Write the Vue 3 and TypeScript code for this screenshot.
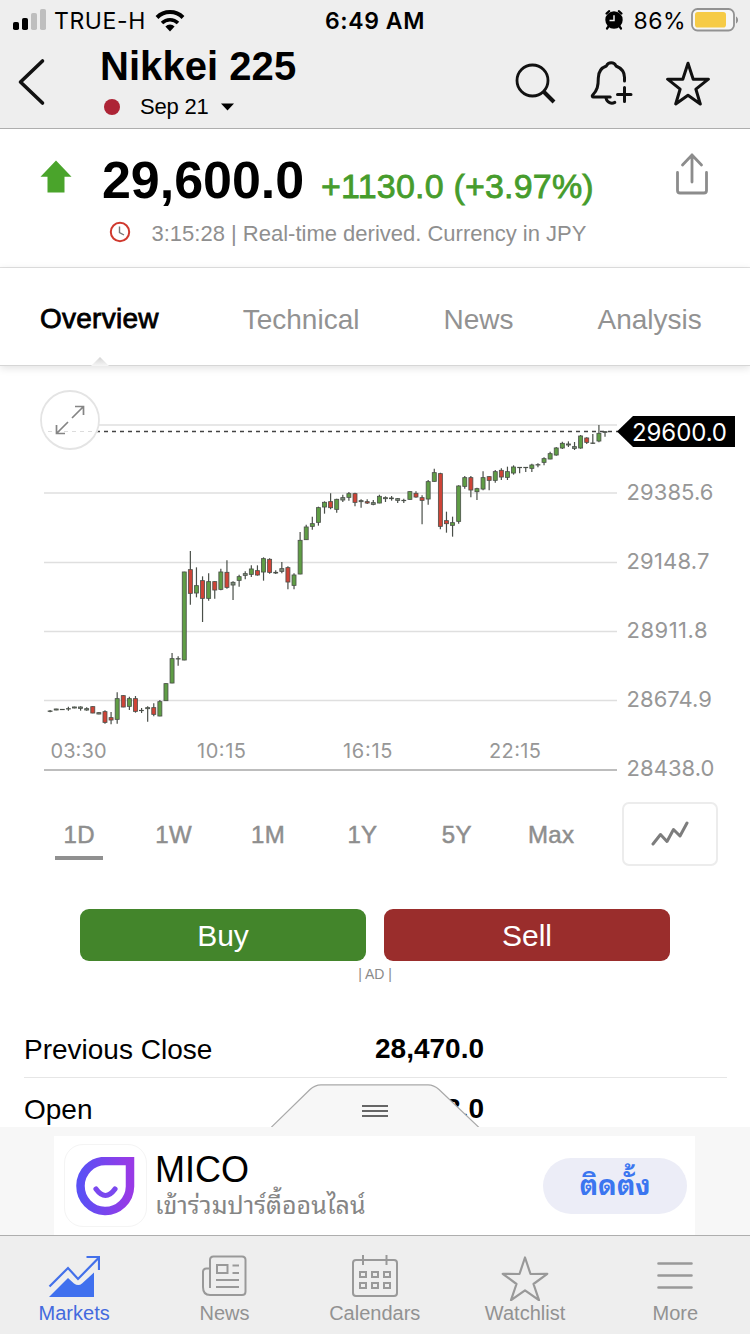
<script setup lang="ts">
interface Candle {
  x: number
  top: number
  bottom: number
  high: number
  low: number
  color: string
}

type Row = [string, number, number, number?, number?]

const colors: Record<string, string> = { g: '#5f9d45', r: '#cf4437', n: '#7a8a78' }

// Each block lists its candles as: kind, body top, body bottom, wick top, wick bottom (in thirds of a pixel below base).
const blocks: { base: number; rows: Row[] }[] = [
  {
    base: 540,
    rows: [
      ['n', 512, 515, 510, 517], ['n', 506, 511], ['n', 507, 509], ['n', 505, 508, 500, 512], ['n', 500, 505],
      ['n', 500, 506, 499, 512], ['n', 505, 511, 502, 512], ['r', 499, 520], ['n', 517, 523], ['r', 514, 548, 511, 551],
      ['r', 532, 541, 516, 553], ['g', 475, 539, 457, 551], ['r', 466, 502], ['g', 475, 500, 470, 510],
      ['r', 475, 515, 468, 518], ['n', 510, 513, 504, 519], ['n', 502, 507, 499, 545], ['r', 502, 524, 490, 529],
      ['g', 484, 529, 480, 529], ['g', 430, 483], ['g', 355, 430, 339, 430], ['n', 355, 358, 349, 377],
      ['g', 95, 361], ['r', 88, 161, 33, 194], ['g', 136, 160, 82, 172], ['r', 121, 176, 109, 246],
      ['g', 124, 176, 100, 182], ['r', 124, 151, 124, 176], ['g', 95, 149, 86, 151], ['r', 96, 143, 61, 146],
      ['n', 126, 136, 124, 180],
    ],
  },
  {
    base: 480,
    rows: [
      ['g', 289, 302, 284, 320], ['n', 280, 287, 274, 298], ['g', 266, 284, 256, 291], ['r', 271, 286, 256, 287],
      ['g', 235, 277, 232, 302], ['r', 237, 278, 235, 281], ['n', 276, 280, 271, 282], ['n', 265, 275, 246, 280],
      ['r', 262, 307, 259, 328], ['g', 284, 317, 280, 328], ['g', 180, 283, 156, 283], ['g', 140, 180, 134, 180],
      ['g', 130, 140, 110, 149], ['g', 82, 128, 80, 137], ['g', 66, 82, 64, 101], ['r', 64, 84, 40, 88],
      ['g', 57, 89, 56, 98], ['n', 52, 61, 44, 66], ['g', 40, 53, 36, 62], ['r', 40, 68, 38, 79],
      ['n', 61, 66, 58, 83], ['r', 64, 70, 58, 72], ['n', 67, 74, 60, 76], ['g', 48, 70, 44, 70],
    ],
  },
  {
    base: 410,
    rows: [
      ['n', 262, 267, 259, 276], ['n', 263, 267, 258, 272], ['n', 265, 272, 264, 279], ['n', 270, 273, 266, 279],
      ['g', 244, 269], ['r', 249, 262, 244, 263], ['r', 262, 272, 256, 343], ['g', 214, 268, 210, 284],
      ['g', 187, 215, 176, 215], ['r', 190, 350, 188, 358], ['r', 331, 342, 305, 368], ['g', 337, 347, 320, 380],
      ['g', 227, 335, 226, 341], ['g', 202, 230, 198, 236], ['r', 202, 241, 198, 262], ['g', 235, 246, 233, 270],
      ['g', 202, 238, 184, 241], ['r', 199, 212, 199, 241], ['g', 184, 212, 180, 218], ['r', 180, 202, 175, 210],
      ['g', 184, 203, 170, 210], ['g', 170, 190, 166, 194], ['n', 171, 173, 171, 190], ['n', 171, 173, 171, 186],
      ['g', 164, 176, 161, 186], ['n', 163, 166, 160, 172], ['g', 145, 158, 142, 166],
    ],
  },
  {
    base: 400,
    rows: [
      ['g', 160, 178, 155, 178], ['g', 143, 166, 141, 167], ['g', 129, 145, 125, 147], ['n', 131, 136, 124, 141],
      ['n', 139, 146, 126, 150], ['g', 107, 145, 105, 146], ['r', 113, 128, 112, 132], ['n', 128, 131, 102, 132],
      ['g', 99, 124, 75, 127], ['n', 94, 98, 94, 110],
    ],
  },
]

const candles: Candle[] = blocks
  .flatMap(({ base, rows }) => rows.map((r) => ({ base, r })))
  .map(({ base, r: [kind, top, bottom, high = top, low = bottom] }, i) => ({
    x: 50.1 + i * 6.098,
    top: base + top / 3,
    bottom: base + bottom / 3,
    high: base + high / 3,
    low: base + low / 3,
    color: colors[kind],
  }))

const gridLines = [425, 493, 562.5, 631.5, 700.5]
const prices = [
  { label: '29385.6', y: 500, w: 87 },
  { label: '29148.7', y: 569, w: 83 },
  { label: '28911.8', y: 638, w: 81 },
  { label: '28674.9', y: 707, w: 85.5 },
  { label: '28438.0', y: 776, w: 88 },
]
const times = [
  { label: '03:30', x: 50.5, w: 56 },
  { label: '10:15', x: 197, w: 49 },
  { label: '16:15', x: 343, w: 49.5 },
  { label: '22:15', x: 489, w: 52 },
]
const tabs = ['Overview', 'Technical', 'News', 'Analysis']
const ranges = ['1D', '1W', '1M', '1Y', '5Y', 'Max']
</script>

<template>
  <main class="screen">
    <div class="status">
      <div class="carrier">
        <svg width="34" height="24" viewBox="0 0 34 24">
          <rect x="1" y="14" width="6" height="8" rx="1.8" />
          <rect x="10" y="10" width="6" height="12" rx="1.8" />
          <rect x="19" y="5" width="6" height="17" rx="1.8" fill="#bebebe" />
          <rect x="28" y="1" width="6" height="21" rx="1.8" fill="#bebebe" />
        </svg>
        <span class="carrier-name">TRUE-H</span>
        <svg class="wifi" width="30" height="23" viewBox="0 0 30 23" fill="none" stroke="#000" stroke-width="4">
          <path d="M2 8.5a18.4 18.4 0 0 1 26 0" />
          <path d="M7 14a11.3 11.3 0 0 1 16 0" stroke-width="3.5" />
          <path d="M15 22.5l-4.6-5a6.5 6.5 0 0 1 9.2 0z" fill="#000" stroke="none" />
        </svg>
      </div>
      <strong class="clock">6:49 AM</strong>
      <div class="power">
        <svg width="20" height="22" viewBox="0 0 20 22">
          <path d="M2.5 4.5L5.2 2.2M17.5 4.5L14.8 2.2M4.5 17.5L3 19.5M15.5 17.5l1.5 2" stroke="#000" stroke-width="2.2" stroke-linecap="round" />
          <circle cx="10" cy="11" r="8.7" />
          <path d="M10 6.2V11.5H5.5" stroke="#eee" stroke-width="1.5" fill="none" />
        </svg>
        <span class="percent">86%</span>
        <svg width="47" height="24" viewBox="0 0 47 24">
          <rect x="1" y="1" width="42" height="21.5" rx="5.5" fill="#f6f6f6" stroke="#929292" stroke-width="1.8" />
          <rect x="4" y="4" width="31" height="15.5" rx="2.8" fill="#f6cb46" />
          <path d="M45 8.5c2.7 1 2.7 6 0 7z" fill="#929292" />
        </svg>
      </div>
    </div>

    <header class="header">
      <svg class="back" width="30" height="50" viewBox="0 0 30 50">
        <path d="M26.5 4L4.5 25l22 21" fill="none" stroke="#111" stroke-width="3.6" stroke-linecap="round" stroke-linejoin="round" />
      </svg>
      <div class="heading">
        <h1>Nikkei 225</h1>
        <div class="date">
          <i class="dot"></i>
          <span>Sep 21</span>
          <svg width="13" height="8" viewBox="0 0 13 8"><path d="M0 .5h13L6.5 7.5z" /></svg>
        </div>
      </div>
      <div class="actions">
        <svg width="44" height="46" viewBox="0 0 44 46" fill="none" stroke="#111">
          <circle cx="18.5" cy="20.5" r="15.5" stroke-width="2.8" />
          <path d="M29.5 31.5L40 42" stroke-width="4" />
        </svg>
        <svg class="bell" width="44" height="48" viewBox="0 0 44 48" fill="none" stroke="#111" stroke-width="3" stroke-linecap="round" stroke-linejoin="round">
          <path d="M35.5 20v-3.5c0-6-3.5-9.500-8.500-11.500-1.800-4.200-7.800-4.200-9.600 0-5 1.800-8.100 6.300-8.100 12 0 8-1 12.500-5.600 17-.9 1-.4 2 .8 2h16.700" />
          <path d="M17 37c1 4.800 5.500 6.200 8.800 4.400" />
          <path d="M35.500 26.500v14M28.500 33.500h13.500" />
        </svg>
        <svg width="46" height="46" viewBox="0 0 46 46">
          <path d="M23 3.200l5.200 16.100 15.200-.1-12.500 10 4.400 14.800L23 35.200l-12.300 8.800 4.400-14.800-12.500-10 15.200.1z" fill="none" stroke="#111" stroke-width="3" stroke-linejoin="round" />
        </svg>
      </div>
    </header>

    <section class="quote">
      <svg class="up" width="32" height="33" viewBox="0 0 32 33"><path d="M16 .5L31.5 16.700H24.500V32.500H7.500V16.700H.5z" fill="#4aa42b" /></svg>
      <div class="figures">
        <div class="price-line">
          <strong class="price">29,600.0</strong>
          <span class="change">+1130.0 (+3.97%)</span>
        </div>
        <div class="meta">
          <svg width="22" height="22" viewBox="0 0 22 22" fill="none">
            <circle cx="11" cy="11" r="9.200" stroke="#d0392e" stroke-width="2" />
            <path d="M10.500 5.500V11.500L15 14" stroke="#777" stroke-width="1.400" />
          </svg>
          <span>3:15:28 | Real-time derived. Currency in JPY</span>
        </div>
      </div>
      <svg class="share" width="34" height="44" viewBox="0 0 34 44" fill="none" stroke="#8c8c8c" stroke-width="2.800" stroke-linecap="round" stroke-linejoin="round">
        <path d="M17 30V3M7.500 13L17 3l9.500 10" />
        <path d="M2.500 20.500v18q0 2.500 2.500 2.500h24q2.500 0 2.500-2.500V20.500" />
      </svg>
    </section>

    <nav class="tabs">
      <a v-for="(t, i) in tabs" :key="t" :class="['tab', { current: i === 0 }]">{{ t }}</a>
      <svg class="notch" width="22" height="9" viewBox="0 0 22 9">
        <defs>
          <linearGradient id="notchShade" x1="0" y1="0" x2="0" y2="1">
            <stop offset="0" stop-color="#d4d4d4" />
            <stop offset="1" stop-color="#f6f6f6" />
          </linearGradient>
        </defs>
        <path d="M2 9L11 0l9 9z" fill="url(#notchShade)" />
      </svg>
    </nav>

    <svg class="chart" width="750" height="424" viewBox="0 366 750 424">
      <line v-for="y in gridLines" :key="y" x1="44" x2="617" :y1="y" :y2="y" stroke="#dfdfdf" stroke-width="1.700" />
      <line x1="44" x2="617" y1="770" y2="770" stroke="#bdbdbd" stroke-width="1.800" />
      <line x1="48" x2="618" y1="431.500" y2="431.500" stroke="#444" stroke-width="1.500" stroke-dasharray="4 4" />
      <g v-for="c in candles" :key="c.x" stroke="#4a4f49">
        <line :x1="c.x" :x2="c.x" :y1="c.high" :y2="c.low" stroke-width="1.200" />
        <rect :x="c.x - 2" :y="c.top + 0.3" width="4" :height="Math.max(c.bottom - c.top - 0.6, 0.4)" :fill="c.color" stroke-width="0.800" />
      </g>
      <g class="axis">
        <text v-for="p in prices" :key="p.label" x="626.500" :y="p.y" :textLength="p.w">{{ p.label }}</text>
      </g>
      <g class="times">
        <text v-for="t in times" :key="t.label" :x="t.x" y="758" :textLength="t.w">{{ t.label }}</text>
      </g>
      <path d="M617 431.500L633 416H735V447H633z" />
      <text class="last" x="632" y="441" textLength="95">29600.0</text>
      <circle cx="70" cy="420" r="29" fill="#fff" stroke="#e4e4e4" stroke-width="1.800" />
      <line x1="48" x2="98" y1="431.500" y2="431.500" stroke="#dcdcdc" stroke-width="1.200" stroke-dasharray="4 4" />
      <path d="M72 418L83 407M75 406.500h8.500v8.500M68 422L57 433M56.500 425v8.500h8.500" fill="none" stroke="#858585" stroke-width="1.700" />
    </svg>

    <section class="ranges">
      <div class="range-list">
        <span v-for="(r, i) in ranges" :key="r" :class="['range', { on: i === 0 }]">{{ r }}</span>
      </div>
      <button class="style-btn">
        <svg width="38" height="26" viewBox="0 0 38 26"><path d="M2 23L9.500 13.500L16 20.500L22.500 8.500L29 15L36 2" fill="none" stroke="#7d7d7d" stroke-width="3" stroke-linecap="round" stroke-linejoin="round" /></svg>
      </button>
    </section>

    <section class="trade">
      <button class="buy">Buy</button>
      <button class="sell">Sell</button>
    </section>
    <div class="ad-note">| AD |</div>

    <section class="stats">
      <div class="stat"><span>Previous Close</span><strong>28,470.0</strong></div>
      <div class="stat"><span>Open</span><strong>28,468.0</strong></div>
      <svg class="handle" width="210" height="45" viewBox="0 0 210 45">
        <path d="M0 45V43.500L39 5.500Q44 .8 50 .8H157Q163 .8 168 5.500L208 43.500V45z" fill="#f7f7f7" />
        <path d="M0 43.500L39 5.500Q44 .8 50 .8H157Q163 .8 168 5.500L208 43.500" fill="none" stroke="#a9a9a9" stroke-width="1.200" />
        <path d="M91 22h26M91 27h26M91 32h26" stroke="#666" stroke-width="1.900" />
      </svg>
    </section>

    <section class="banner">
      <div class="promo">
        <div class="app-icon">
          <svg width="60" height="60" viewBox="0 0 60 60">
            <defs>
              <linearGradient id="promoFill" x1="0" y1="0" x2="1" y2="0">
                <stop offset="0" stop-color="#5a50f5" />
                <stop offset="1" stop-color="#983ae6" />
              </linearGradient>
            </defs>
            <path d="M29.500 4H54V29.500A24.750 25 0 1 1 29.500 4z" fill="none" stroke="url(#promoFill)" stroke-width="8.500" />
            <path d="M20 32q9.500 13 19 0" fill="none" stroke="#7a48ef" stroke-width="5.200" stroke-linecap="round" />
          </svg>
        </div>
        <div class="promo-text">
          <div class="promo-name">MICO</div>
          <div class="promo-sub">เข้าร่วมปาร์ตี้ออนไลน์</div>
        </div>
        <button class="install">ติดตั้ง</button>
      </div>
    </section>

    <nav class="bottom">
      <a class="item active">
        <svg width="52" height="44" viewBox="0 0 52 44">
          <path d="M1.500 31.500L20 13l10 11L50.500 3M38.500 2h12.500v13" fill="none" stroke="#4370ea" stroke-width="2.200" />
          <path d="M1 42L20 23l6 5.500q4.500 3 8 0L46 17.500V42z" fill="#4070ee" />
        </svg>
        <span>Markets</span>
      </a>
      <a class="item">
        <svg width="46" height="44" viewBox="0 0 46 44" fill="none" stroke="#999" stroke-width="2">
          <path d="M9 33V5q0-3.500 3.500-3.500h28.500q3.500 0 3.500 3.500v31.500q0 3.500-3.500 3.500H9q-7 0-7-8V17q0-3.500 3.500-3.500H9" />
          <path d="M16 10h10.500v8H16zM31.500 10.500h6.500M31.500 18h6.500M15 25h23M15 32h23" />
        </svg>
        <span>News</span>
      </a>
      <a class="item">
        <svg width="48" height="44" viewBox="0 0 48 44" fill="none" stroke="#999" stroke-width="2">
          <rect x="2" y="5" width="44" height="36" rx="3" />
          <path d="M12 0v10M35.500 0v10" />
          <path d="M9 17h6v5H9zM21 17h6v5h-6zM33 17h6v5h-6zM9 28h6v5H9zM21 28h6v5h-6zM33 28h6v5h-6z" />
        </svg>
        <span>Calendars</span>
      </a>
      <a class="item">
        <svg width="50" height="46" viewBox="0 0 50 46">
          <path d="M25 2.500l5.500 16.500 16.800-.2-13.800 10.200 5.500 16.200L25 35.300l-14 9.900 5.500-16.200L2.700 18.800l16.800.2z" fill="none" stroke="#999" stroke-width="2.200" stroke-linejoin="round" />
        </svg>
        <span>Watchlist</span>
      </a>
      <a class="item">
        <svg width="36" height="44" viewBox="0 0 36 44"><path d="M1.500 8.500h33M1.500 20.500h33M1.500 32.500h33" stroke="#999" stroke-width="2.600" stroke-linecap="round" /></svg>
        <span>More</span>
      </a>
    </nav>
  </main>
</template>

<style>
body {
  margin: 0;
  background: #fff;
}
</style>

<style scoped>
* {
  box-sizing: border-box;
}
.screen {
  width: 750px;
  height: 1334px;
  overflow: hidden;
  display: flex;
  flex-direction: column;
  background: #fff;
  color: #000;
  font-family: "Liberation Sans", Arial, "Noto Sans Thai Looped", Loma, "Noto Sans Thai", sans-serif;
}
.screen > * {
  flex: none;
}
svg {
  display: block;
  flex: none;
}
button {
  border: 0;
  padding: 0;
  font-family: inherit;
}
.status {
  height: 40px;
  padding: 0 12px;
  display: grid;
  grid-template-columns: 1fr auto 1fr;
  align-items: center;
  background: #eee;
  font-family: Inter, "Liberation Sans", sans-serif;
}
.carrier,
.power {
  display: flex;
  align-items: center;
}
.carrier-name {
  margin-left: 8px;
  font-size: 23px;
  letter-spacing: 0.6px;
  line-height: 28px;
  padding-top: 1px;
}
.wifi {
  margin-left: 9px;
}
.clock {
  font-size: 23px;
  font-weight: 600;
  letter-spacing: 0.6px;
  line-height: 28px;
  padding-top: 1px;
}
.power {
  justify-content: flex-end;
}
.percent {
  margin: 0 5px 0 9px;
  font-size: 23px;
  letter-spacing: 0.5px;
  line-height: 28px;
  padding-top: 1px;
}
.header {
  height: 89px;
  display: flex;
  align-items: flex-start;
  background: #eee;
  border-bottom: 1px solid #aeaeae;
}
.back {
  margin: 17px 0 0 16px;
}
.heading {
  margin-left: 54px;
  width: 414px;
}
h1 {
  margin: 3px 0 0;
  font-size: 40px;
  line-height: 46px;
  letter-spacing: 0.05px;
}
.date {
  display: flex;
  align-items: center;
  height: 25px;
  margin: 5px 0 0 4px;
  font-size: 22px;
  letter-spacing: -0.2px;
}
.dot {
  width: 16px;
  height: 16px;
  margin-right: 20px;
  border-radius: 50%;
  background: #ad2436;
}
.date svg {
  margin-left: 12px;
}
.actions {
  display: flex;
  margin-top: 20px;
  gap: 32px;
}
.bell {
  margin: 1px 0 0 -1px;
}
.quote {
  height: 139px;
  display: flex;
  align-items: flex-start;
  border-bottom: 1px solid #e2e2e2;
}
.up {
  margin: 31px 0 0 40px;
}
.figures {
  width: 573px;
  margin-left: 30px;
  padding-top: 21px;
}
.price-line {
  display: flex;
  align-items: baseline;
  height: 69px;
  line-height: 60px;
}
.price {
  font-size: 52px;
  letter-spacing: -0.05px;
}
.change {
  margin-left: 17px;
  font-size: 34px;
  letter-spacing: 0.2px;
  color: #469c2c;
  -webkit-text-stroke: 0.8px #469c2c;
  white-space: nowrap;
}
.meta {
  display: flex;
  align-items: center;
  height: 30px;
  margin-left: 7px;
  gap: 20.5px;
  font-size: 22px;
  color: #8f8f8f;
}
.meta svg {
  margin-top: -5px;
}
.share {
  margin-top: 23px;
}
.tabs {
  position: relative;
  height: 98px;
  display: flex;
  border-bottom: 1px solid #d6d6d6;
  box-shadow: 0 2px 8px rgba(0, 0, 0, 0.12);
  padding-left: 40px;
  font-size: 28px;
  line-height: 103px;
  color: #929292;
}
.tab:nth-child(n + 2) {
  margin-left: 84px;
}
.current {
  color: #000;
  letter-spacing: 0.25px;
  line-height: 101px;
  -webkit-text-stroke: 0.8px #000;
}
.notch {
  position: absolute;
  left: 89px;
  bottom: -1px;
}
.axis {
  font: 22px Inter, "Liberation Sans", sans-serif;
  fill: #979797;
}
.times {
  font: 20px Inter, "Liberation Sans", sans-serif;
  fill: #979797;
}
.last {
  font: 24px Inter, "Liberation Sans", sans-serif;
  fill: #fff;
}
.ranges {
  height: 119px;
  padding: 12px 32px 0 32px;
  display: flex;
  justify-content: space-between;
}
.range-list {
  display: flex;
}
.range {
  width: 94.4px;
  height: 58px;
  line-height: 66px;
  text-align: center;
  font-size: 24px;
  letter-spacing: 0.3px;
  color: #8e8e8e;
  -webkit-text-stroke: 0.5px #8e8e8e;
}
.range.on {
  background: linear-gradient(#909090, #909090) center bottom / 48px 4px no-repeat;
}
.style-btn {
  width: 96px;
  height: 64px;
  display: flex;
  align-items: center;
  justify-content: center;
  background: #fff;
  border: 2px solid #ececec;
  border-radius: 7px;
}
.trade {
  display: flex;
  gap: 18px;
  margin-left: 80px;
}
.trade button {
  width: 286px;
  height: 52px;
  border-radius: 9px;
  color: #fff;
  font-size: 30px;
  line-height: 54px;
}
.buy {
  background: #43852b;
}
.sell {
  background: #9a2d2c;
}
.ad-note {
  height: 56px;
  padding-top: 5px;
  font-size: 14px;
  color: #8a8a8a;
  text-align: center;
}
.stats {
  position: relative;
  height: 110px;
  overflow: hidden;
  padding: 1px 23px 0 24px;
  font-size: 28px;
}
.stat {
  height: 60px;
  display: flex;
  align-items: center;
  padding-top: 5px;
  border-bottom: 1px solid #e6e6e6;
}
.stat:nth-child(2) {
  padding-top: 4px;
}
.stat span {
  width: 351px;
}
.stat strong {
  line-height: 30px;
  margin-top: -2px;
}
.handle {
  position: absolute;
  left: 271px;
  bottom: -2px;
}
.banner {
  height: 108px;
  padding: 9px 55px 0 54px;
  background: #f7f7f7;
}
.promo {
  height: 99px;
  display: flex;
  align-items: flex-start;
  background: #fff;
}
.app-icon {
  flex: none;
  width: 83px;
  height: 83px;
  margin: 8px 0 0 10px;
  padding: 12px 0 0 11px;
  border: 1px solid #f4f4f4;
  border-radius: 19px;
}
.promo-text {
  width: 387px;
  margin-left: 8px;
}
.promo-name {
  margin-top: 14px;
  font-size: 36px;
  line-height: 40px;
}
.promo-sub {
  font-size: 25px;
  line-height: 30px;
  color: #858585;
  white-space: nowrap;
}
.install {
  width: 144px;
  height: 56px;
  margin: 22px 0 0 1px;
  padding-bottom: 7px;
  border-radius: 28px;
  background: #ecedf7;
  color: #3b76f0;
  font-size: 27.5px;
  font-weight: 700;
}
.bottom {
  height: 99px;
  padding: 19px 0 0;
  display: grid;
  grid-template-columns: repeat(5, 150.3px);
  margin-left: -1px;
  width: 752px;
  background: #eee;
  border-top: 1px solid #aeaeae;
}
.item {
  height: 73px;
  display: flex;
  flex-direction: column;
  align-items: center;
  justify-content: space-between;
  font-size: 20px;
  line-height: 30px;
  color: #929292;
}
.item svg {
  margin-bottom: -4px;
}
.active {
  color: #446ade;
}
</style>
